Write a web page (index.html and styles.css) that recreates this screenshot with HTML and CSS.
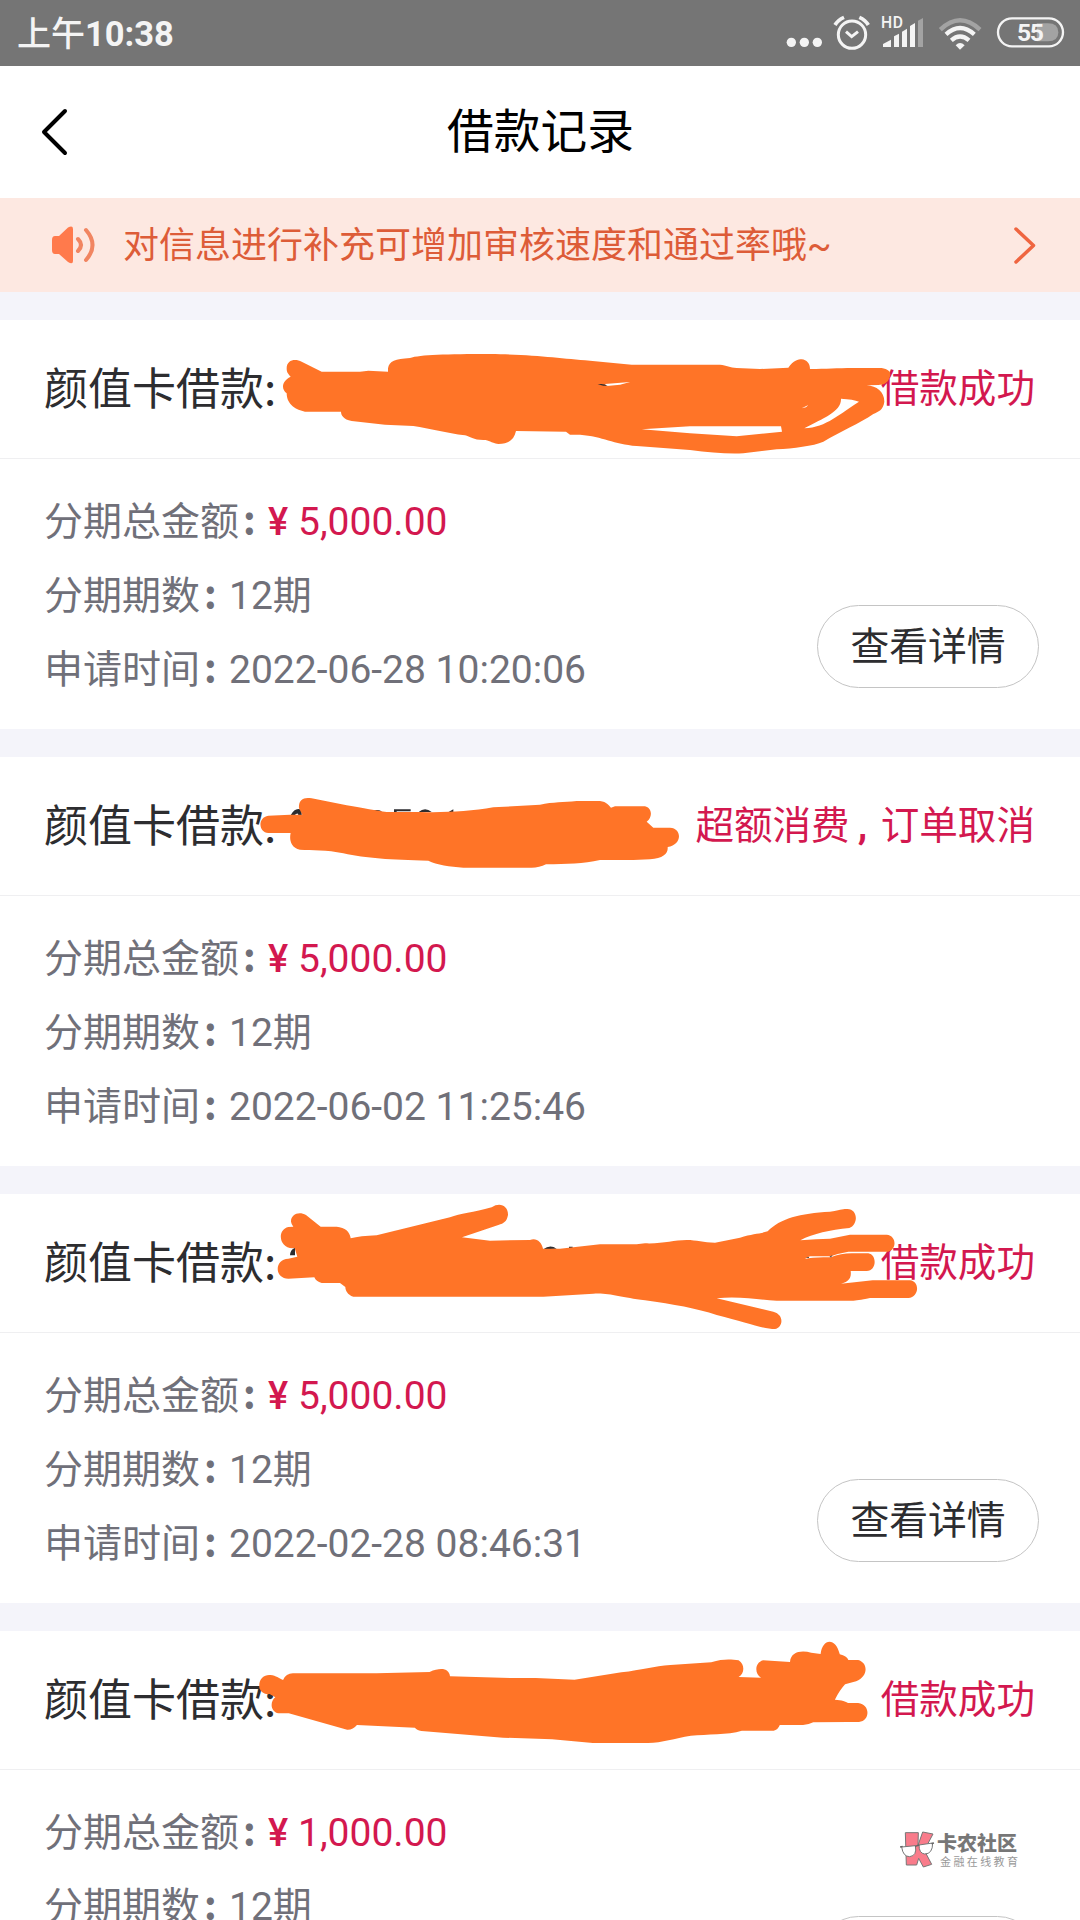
FILE: index.html
```html
<!DOCTYPE html>
<html lang="zh-CN">
<head>
<meta charset="utf-8">
<title>借款记录</title>
<link rel="stylesheet" href="styles.css">
</head>
<body>
<div class="statusbar">
  <div class="clock"><span class="ampm">上午</span>10:38</div>
  <svg class="status-icons" width="320" height="66" viewBox="0 0 960 198">
    <g fill="#f4f4f4"><circle cx="94" cy="127" r="14"/><circle cx="133" cy="127" r="14"/><circle cx="172" cy="127" r="14"/></g>
    <g fill="none" stroke="#f4f4f4" stroke-width="9">
      <circle cx="276" cy="104" r="41"/>
      <path d="M258 95L275 110L294 95"/>
      <path d="M225 75Q234 60 252 52M325 75Q316 60 298 52" stroke-width="11"/>
    </g>
    <path d="M369 141V132L393 119V141ZM402 141V109L417 101V141ZM426 141V95L441 86V141ZM450 141V78L465 69V141Z" fill="#f4f4f4"/>
    <path d="M474 141V62L489 54V141Z" fill="#a3a3a3"/>
    <g fill="none" stroke-width="13">
      <path d="M541 89Q600 33 660 89" stroke="#a3a3a3"/>
      <path d="M558 103Q600 65 643 103" stroke="#f4f4f4"/>
      <path d="M574 121Q600 98 627 121" stroke="#f4f4f4"/>
    </g>
    <path d="M587 136Q600 122 614 136L600 149Z" fill="#f4f4f4"/>
    <path d="M830 70H864Q895 70 895 97T864 124H830Z" fill="#a3a3a3"/>
    <rect x="714" y="55" width="195" height="84" rx="42" fill="none" stroke="#f4f4f4" stroke-width="7"/>
    <text x="363" y="84" class="hd-label">HD</text>
    <text x="771" y="123" class="battery-label">55</text>
  </svg>
</div>
<header class="header">
  <svg class="back" width="36" height="54" viewBox="0 0 36 54"><path d="M29 6L8 27L29 48" fill="none" stroke="#000" stroke-width="4" stroke-linecap="round" stroke-linejoin="round"/></svg>
  <h1>借款记录</h1>
</header>
<div class="notice">
  <svg width="44" height="40" viewBox="0 0 44 40">
    <path d="M4 11H8L17 2.500Q22 0 22 4V36Q22 40 17 37L8 29H4Q1 29 1 25V15Q1 11 4 11Z" fill="#ff7a4c"/>
    <path d="M27 14Q33 20 27 26M35 5Q48 20 35 35" fill="none" stroke="#f18561" stroke-width="4" stroke-linecap="round"/>
  </svg>
  <p>对信息进行补充可增加审核速度和通过率哦~</p>
  <svg class="go" width="24" height="40" viewBox="0 0 24 40"><path d="M2 4L19.500 20.500L2 37" fill="none" stroke="#ef6540" stroke-width="3.500" stroke-linecap="round" stroke-linejoin="round"/></svg>
</div>
<main class="list">
  <section class="card">
    <div class="card-head"><h2>颜值卡借款<i>:</i></h2><span class="state">借款成功</span></div>
    <div class="card-body">
      <div class="rows">
        <p>分期总金额<i>:</i><b><span class="yen">¥</span>5,000.00</b></p>
        <p>分期期数<i>:</i>12期</p>
        <p>申请时间<i>:</i>2022-06-28 10:20:06</p>
      </div>
      <button class="detail">查看详情</button>
    </div>
    <svg class="scribble s1" width="650" height="130" viewBox="0 0 1950 390">
      <path fill-rule="evenodd" d="M80 85C80 60 105 55 125 65L185 95H300L325 92L384 95V85C388 62 405 58 450 54C480 44 560 42 690 42C830 44 900 55 990 62L1115 74H1380C1400 76 1410 82 1430 84L1500 87L1585 83C1600 62 1615 58 1625 58C1640 60 1650 70 1650 87C1700 87 1730 84 1780 84H1865C1890 88 1895 100 1888 115C1882 130 1870 135 1855 135L1820 136C1850 138 1873 155 1873 185C1870 210 1855 215 1840 222C1800 250 1740 275 1690 305C1660 318 1600 325 1550 328L1450 340C1400 342 1350 338 1290 330L1130 318C1060 312 1030 290 960 284H930L918 275L768 273C762 300 745 312 715 312C690 308 690 300 670 300C640 300 630 290 615 286C560 280 510 265 460 258L375 254L275 243C250 238 243 225 243 215H135C110 210 80 195 80 160C65 150 62 125 92 110C82 100 80 95 80 85ZM1145 268L1290 259H1563L1566 275L1430 289L1290 280ZM1633 265C1690 235 1745 215 1743 176Q1780 178 1797 185C1740 220 1700 262 1633 265ZM1035 132L1110 126L1080 134L1040 138ZM1625 205L1645 195L1638 202Z"/>
      <path class="ink" d="M1013 133Q1030 129 1043 137H1030Z"/>
    </svg>
  </section>
  <section class="card">
    <div class="card-head"><h2>颜值卡借款<i>:</i></h2><span class="state">超额消费<span class="comma">,</span>订单取消</span></div>
    <div class="card-body">
      <div class="rows">
        <p>分期总金额<i>:</i><b><span class="yen">¥</span>5,000.00</b></p>
        <p>分期期数<i>:</i>12期</p>
        <p>申请时间<i>:</i>2022-06-02 11:25:46</p>
      </div>
    </div>
    <svg class="scribble s2" width="440" height="110" viewBox="0 0 1320 330">
      <path class="ink" d="M122 106Q136 80 155 90V106H145Q145 95 133 106ZM362 97Q378 84 395 94L390 101ZM432 88H482V94H440V99H432ZM506 96Q525 80 545 96ZM592 98L610 88V98Z"/>
      <path d="M147 85C145 60 160 50 185 55L290 76C340 84 380 93 410 96H510C580 98 660 95 730 82L870 74C910 65 940 68 980 63H1050C1070 65 1078 78 1083 83L1095 79H1185C1205 83 1210 110 1190 125L1210 143H1260C1297 145 1297 195 1253 201C1255 220 1240 236 1200 238L1150 240H1050C1000 252 950 252 888 253C875 260 860 263 845 263H640C600 260 560 255 535 242C420 240 350 235 280 220C230 208 185 212 150 209C120 203 118 175 122 159H55C25 157 22 112 55 107L120 104H157Z"/>
    </svg>
  </section>
  <section class="card">
    <div class="card-head"><h2>颜值卡借款<i>:</i></h2><span class="state">借款成功</span></div>
    <div class="card-body">
      <div class="rows">
        <p>分期总金额<i>:</i><b><span class="yen">¥</span>5,000.00</b></p>
        <p>分期期数<i>:</i>12期</p>
        <p>申请时间<i>:</i>2022-02-28 08:46:31</p>
      </div>
      <button class="detail">查看详情</button>
    </div>
    <svg class="scribble s3" width="680" height="150" viewBox="0 0 2040 450">
      <path class="ink" d="M90 196Q90 180 105 173V196ZM850 178Q870 162 890 176ZM927 170H938V177H927Z"/>
      <path d="M93 95C92 75 115 62 138 75L182 110H230C255 112 270 125 272 145Q300 138 350 136L570 82C600 70 640 68 695 52C720 35 745 48 744 75C740 95 732 100 715 105L606 142L690 152L810 150C828 142 845 155 849 176L900 176L1020 163H1130L1155 160C1210 162 1240 150 1280 150C1310 150 1330 158 1365 158L1440 143C1480 130 1500 132 1523 124C1560 85 1620 70 1710 65C1740 60 1750 56 1762 57C1795 57 1795 105 1768 114C1710 120 1660 130 1621 151Q1670 146 1710 146L1770 134H1880C1912 137 1910 182 1882 185H1765Q1735 190 1712 199H1650Q1640 203 1635 207Q1660 200 1712 202Q1745 189 1780 190H1825C1852 195 1850 242 1820 243H1772C1775 265 1765 275 1743 281L1838 271H1950C1980 274 1978 321 1945 324H1830C1800 330 1790 332 1775 332H1550C1500 330 1440 318 1370 325L1540 365C1575 375 1568 413 1545 417C1510 417 1460 398 1370 375C1310 355 1240 343 1155 331C1080 322 1050 308 1000 311L850 320H280C262 315 256 300 256 291L240 279H185Q168 275 163 262L85 266C42 266 43 207 85 206L112 200L104 174C58 180 48 120 85 111L100 110Q94 102 93 95Z"/>
      <path class="ink" d="M1638 203Q1648 199 1647 204ZM1708 201L1718 195L1713 202Z"/>
    </svg>
  </section>
  <section class="card">
    <div class="card-head"><h2>颜值卡借款<i>:</i></h2><span class="state">借款成功</span></div>
    <div class="card-body">
      <div class="rows">
        <p>分期总金额<i>:</i><b><span class="yen">¥</span>1,000.00</b></p>
        <p>分期期数<i>:</i>12期</p>
      </div>
      <button class="detail">查看详情</button>
    </div>
    <svg class="scribble s4" width="640" height="130" viewBox="0 0 1568 390" preserveAspectRatio="none">
      <path d="M23 175C20 145 35 133 50 135C65 137 70 145 81 150Q88 130 105 130H310L440 126C470 110 488 117 490 139L640 144H700L795 149L910 127C960 120 990 108 1030 105L1130 97C1160 85 1180 88 1197 91C1213 103 1212 130 1197 141L1252 143C1235 130 1237 98 1257 91L1323 96C1325 65 1350 60 1375 68L1398 72C1402 25 1435 20 1445 73Q1462 78 1466 90H1490C1515 98 1515 140 1485 154L1458 163Q1445 180 1433 209C1450 210 1460 215 1465 219H1490C1520 223 1520 272 1492 276H1465L1380 277Q1370 284 1355 285H1298Q1293 300 1283 302H1205C1170 315 1120 312 1080 317C1040 325 1010 338 975 339H840L740 328L620 323L420 303Q408 300 404 293L262 285Q252 300 238 299L95 250H70C50 245 48 215 62 202L48 192Q30 195 23 175Z"/>
    </svg>
  </section>
</main>
<div class="watermark">
  <svg width="36" height="38" viewBox="0 0 108 114">
    <path d="M16 5H55L54 43L68 3L99 9L73 58L95 100L70 108L56 82L50 102H19Z" fill="#f97c8b" stroke="#777" stroke-width="3"/>
    <path d="M5 48L46 44Q52 74 29 77Q9 77 5 48ZM57 42L98 36Q98 69 74 69Q57 67 57 42Z" fill="#fff" stroke="#777" stroke-width="3"/>
    <path d="M0 48L8 46M94 38L102 36M45 46L58 42" stroke="#666" stroke-width="4"/>
  </svg>
  <div class="brand"><strong>卡农社区</strong><small>金融在线教育</small></div>
</div>
</body>
</html>
```
FILE: styles.css
```css
* { box-sizing: border-box; }
body, h1, h2, p { margin: 0; font-weight: 400; }
body {
  position: relative;
  width: 1080px;
  height: 1920px;
  overflow: hidden;
  background: #f4f4fa;
  font-family: Roboto, "Noto Sans CJK SC", sans-serif;
}
i, b { font-style: normal; font-weight: 400; }
svg { display: block; flex: none; }

.statusbar {
  height: 66px;
  background: #757575;
  display: flex;
  justify-content: space-between;
  align-items: center;
  padding-left: 17px;
}
.clock { color: #f4f4f4; font-size: 34.5px; font-weight: 700; line-height: 66px; padding-top: 1px; }
.ampm { font-weight: 500; font-size: 34px; }
.hd-label { font: 500 47px Roboto, sans-serif; fill: #f4f4f4; letter-spacing: 2px; }
.battery-label { font: 700 74px Roboto, sans-serif; fill: #f4f4f4; letter-spacing: -4px; }

.header {
  height: 132px;
  background: #fff;
  display: grid;
  grid-template-columns: 36px 1fr 36px;
  align-items: center;
  padding: 0 35px 0 36px;
}
.header h1 { text-align: center; font-size: 46.7px; line-height: 66px; color: #000; }

.notice {
  height: 94px;
  background: #fde8e1;
  display: flex;
  align-items: center;
  padding: 0 42px 0 51px;
  color: #dd5c38;
}
.notice p { flex: 1; margin-left: 28px; font-size: 36px; line-height: 50px; padding-top: 1px; }

.list { height: 1628px; overflow: hidden; padding-top: 28px; display: flex; flex-direction: column; gap: 28px; }
.card { position: relative; height: 409px; flex: none; background: #fff; }
.card-head {
  height: 139px;
  border-bottom: 1px solid #efeff1;
  display: flex;
  justify-content: space-between;
  align-items: center;
  padding: 0 45px 0 44px;
}
.card-head h2 { font-size: 44px; color: #2d2d30; line-height: 60px; padding-bottom: 2px; }
.card-head h2 i { font-family: "Noto Sans CJK SC", sans-serif; }
.state { font-size: 38.6px; line-height: 56px; color: #d3184f; }
.comma { display: inline-block; width: 31px; padding-left: 8px; font-weight: 700; }

.card-body {
  height: 270px;
  display: flex;
  justify-content: space-between;
  align-items: flex-end;
  padding: 26px 41px 41px 44px;
}
.rows { align-self: flex-start; }
.rows p { height: 74px; line-height: 74px; font-size: 39px; color: #707079; white-space: pre; }
.rows i { display: inline-block; width: 29px; padding-left: 4px; font-family: "Noto Sans CJK SC", sans-serif; font-weight: 700; line-height: 60px; }
.rows b { color: #d3184f; }
.yen { display: inline-block; width: 30px; font-size: 38px; font-weight: 500; }
.detail {
  width: 222px;
  height: 83px;
  padding: 0 0 8px;
  border: 1px solid #c4c4c4;
  border-radius: 42px;
  background: #fff;
  font: 38.8px/60px "Noto Sans CJK SC", sans-serif;
  color: #2d2d30;
}

.scribble { position: absolute; fill: #ff7427; }
.scribble .ink { fill: #2d2d30; }
.s1 { left: 260px; top: 20px; }
.s2 { left: 250px; top: 23px; }
.s3 { left: 260px; top: -4px; }
.s4 { left: 250px; top: -1px; }

.watermark { position: absolute; left: 900px; top: 1831px; display: flex; gap: 1px; }
.brand { display: flex; flex-direction: column; font-family: "Noto Sans CJK SC", sans-serif; }
.brand strong { font-size: 20px; line-height: 24px; font-weight: 900; color: #777; }
.brand small { font-size: 11px; line-height: 13px; letter-spacing: 2.4px; padding-left: 3px; color: #999; }
```
